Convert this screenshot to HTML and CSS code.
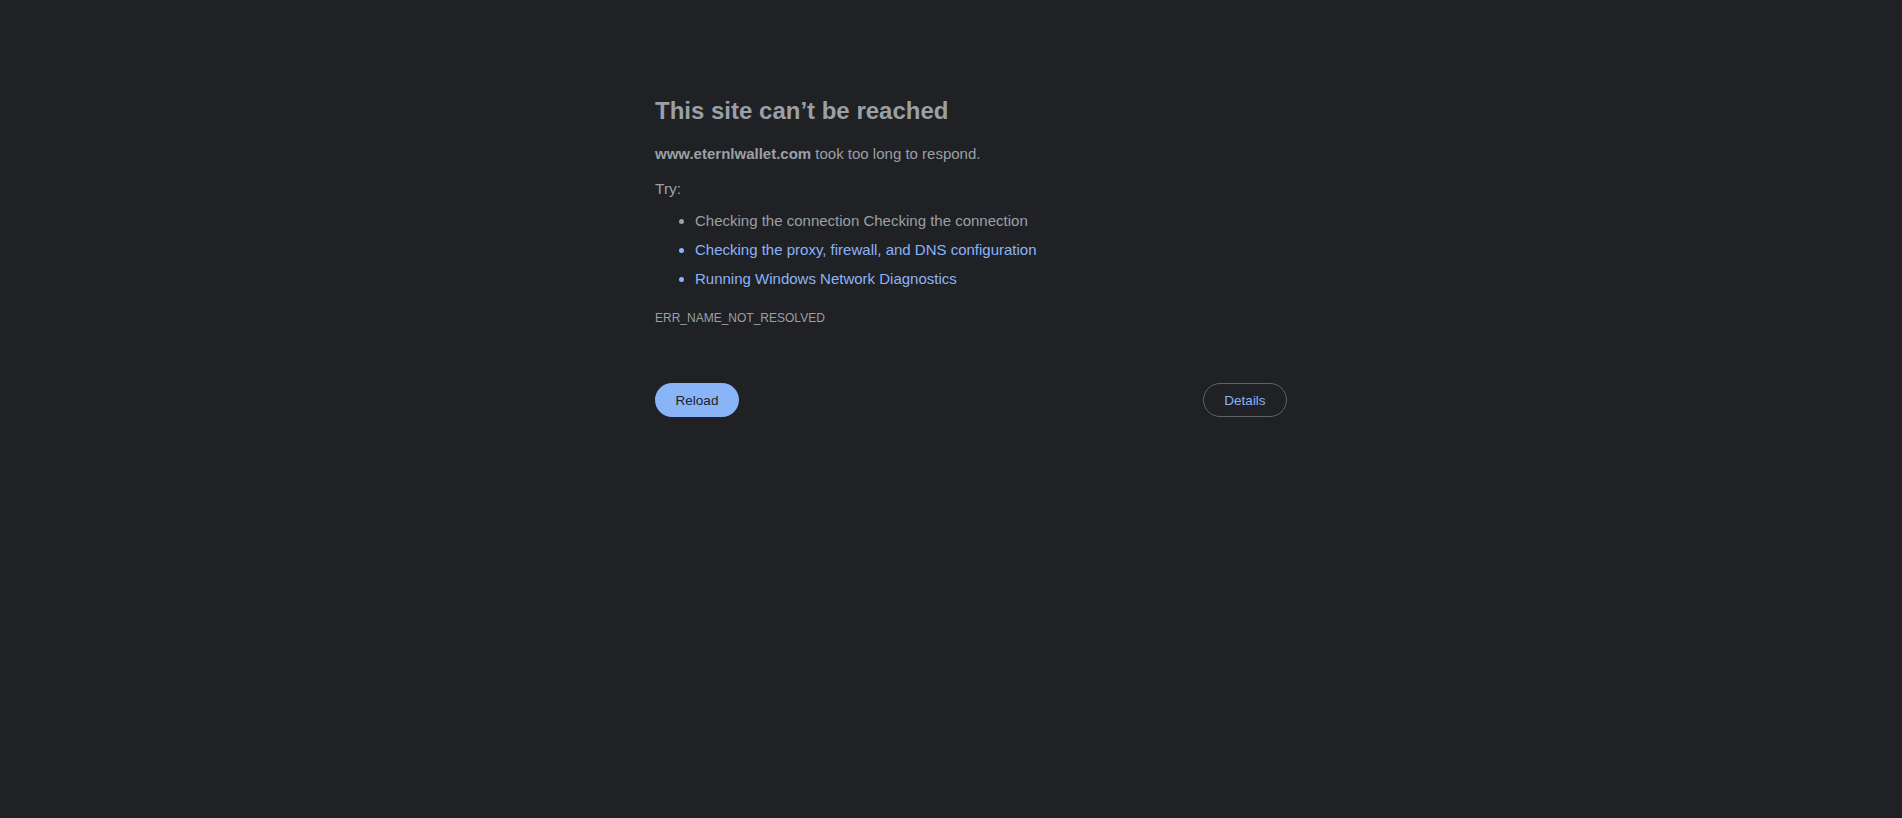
FILE: index.html
```html
<!DOCTYPE html>
<html lang="en">
<head>
  <meta charset="UTF-8">
  <meta name="viewport" content="width=device-width, initial-scale=1.0">
  <title>www.eternlwallet.com</title>
  <link rel="stylesheet" href="styles.css">
</head>
<body>
  <div class="wrapper">
    <h1>This site can’t be reached</h1>
    <p class="summary"><strong>www.eternlwallet.com</strong> took too long to respond.</p>
    <p class="try">Try:</p>
    <ul class="suggestions">
      <li>Checking the connection Checking the connection</li>
      <li><a href="#">Checking the proxy, firewall, and DNS configuration</a></li>
      <li><a href="#">Running Windows Network Diagnostics</a></li>
    </ul>
    <div class="error-code">ERR_NAME_NOT_RESOLVED</div>
    <div class="nav">
      <button class="btn-primary">Reload</button>
      <button class="btn-secondary">Details</button>
    </div>
  </div>
</body>
</html>
```

FILE: styles.css
```css
body {
  margin: 0;
  padding: 0;
  background: #202124;
  color: #9aa0a6;
  font-family: 'Liberation Sans', Arial, sans-serif;
  font-size: 15px;
}

.wrapper {
  width: 632px;
  margin-left: calc(50% - 296px);
  padding-top: 96px;
}

h1 {
  font-size: 24px;
  font-weight: bold;
  line-height: 30px;
  color: #9aa0a6;
  margin: 0 0 16px;
}

.summary {
  margin: 0;
  line-height: 24px;
}

.summary strong {
  color: #9aa0a6;
}

.try {
  margin: 11px 0 0;
  font-size: 15.5px;
  line-height: 24px;
}

.suggestions {
  margin: 8px 0 0;
  padding-left: 40px;
}

.suggestions li {
  line-height: 24px;
}

.suggestions li + li {
  margin-top: 5px;
}

.suggestions a {
  color: #8ab4f8;
  text-decoration: none;
}

.suggestions li:nth-child(n+2)::marker {
  color: #8ab4f8;
}

.error-code {
  margin-top: 18px;
  font-size: 12px;
  line-height: 19px;
}

.nav {
  display: flex;
  justify-content: space-between;
  margin-top: 55px;
}

.nav button {
  display: flex;
  align-items: center;
  justify-content: center;
  width: 84px;
  height: 34px;
  border-radius: 17px;
  font-family: 'Liberation Sans', Arial, sans-serif;
  font-size: 13.5px;
  padding: 0;
  cursor: pointer;
}

.btn-primary {
  background: #8ab4f8;
  color: #202124;
  border: none;
  height: 33px;
}

.btn-secondary {
  background: transparent;
  color: #8ab4f8;
  border: 1px solid #5f6368;
}
```
